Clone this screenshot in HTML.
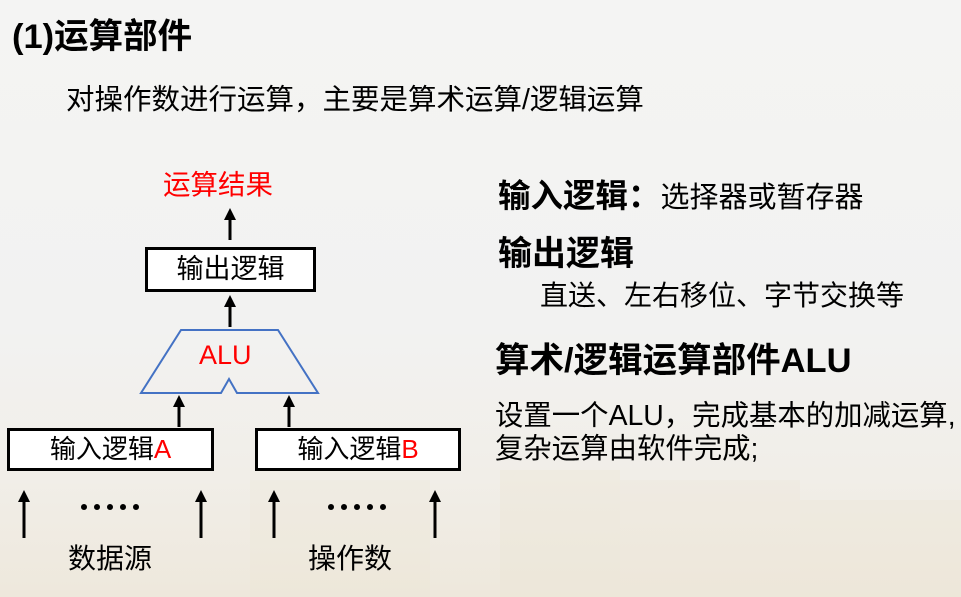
<!DOCTYPE html>
<html><head><meta charset="utf-8"><style>
body{margin:0;width:961px;height:597px;overflow:hidden;position:relative;
background:linear-gradient(180deg,#f4f4f3 0%,#f2f2f1 55%,#f1eee8 80%,#eee8dc 100%);
font-family:"Liberation Sans","Noto Sans CJK SC",sans-serif;color:#000}
.t{position:absolute;white-space:nowrap;line-height:1}
.b{font-weight:bold}
.box{position:absolute;border:3px solid #000;background:#fff;box-sizing:border-box;text-align:center;font-size:26px}
.red{color:#f00}
.bg{position:absolute;background:#ece5d4;opacity:.35}
</style></head><body>
<div class="bg" style="left:500px;top:470px;width:120px;height:127px"></div>
<div class="bg" style="left:620px;top:480px;width:180px;height:117px;opacity:.25"></div>
<div class="bg" style="left:800px;top:500px;width:161px;height:97px;opacity:.3"></div>
<div class="bg" style="left:250px;top:480px;width:180px;height:117px;opacity:.2"></div>

<div class="t b" style="left:12px;top:20px;font-size:34.5px">(1)运算部件</div>
<div class="t" style="left:66px;top:86px;font-size:28.5px">对操作数进行运算，主要是算术运算/逻辑运算</div>

<div class="t red" style="left:163px;top:171px;font-size:27.5px">运算结果</div>

<svg style="position:absolute;left:0;top:0" width="480" height="597">
<defs><marker id="a" markerWidth="4" markerHeight="4" refX="2" refY="2" orient="auto"><path d="M0,0L4,2L0,4z" fill="#000"/></marker></defs>
<g stroke="#000" stroke-width="3" marker-end="url(#a)">
<line x1="230" y1="240" x2="230" y2="214"/>
<line x1="230" y1="327" x2="230" y2="301"/>
<line x1="179" y1="427" x2="179" y2="401"/>
<line x1="289" y1="427" x2="289" y2="401"/>
<line x1="24" y1="538" x2="24" y2="496"/>
<line x1="201" y1="538" x2="201" y2="496"/>
<line x1="274" y1="538" x2="274" y2="496"/>
<line x1="435" y1="538" x2="435" y2="496"/>
</g>
<path d="M181,330L278,330L318,393L237,393L229,379L221,393L141,393Z" fill="none" stroke="#4472c4" stroke-width="2"/>
<g fill="#000">
<circle cx="84" cy="507" r="3"/><circle cx="97" cy="507" r="3"/><circle cx="110" cy="507" r="3"/><circle cx="123" cy="507" r="3"/><circle cx="136" cy="507" r="3"/>
<circle cx="331" cy="507" r="3"/><circle cx="344" cy="507" r="3"/><circle cx="357" cy="507" r="3"/><circle cx="370" cy="507" r="3"/><circle cx="383" cy="507" r="3"/>
</g>
</svg>

<div class="box" style="left:145px;top:247px;width:171px;height:45px;line-height:39px;font-size:27px">输出逻辑</div>
<div class="t red" style="left:199px;top:342px;font-size:27px">ALU</div>
<div class="box" style="left:7px;top:428px;width:207px;height:43px;line-height:37px">输入逻辑<span class="red">A</span></div>
<div class="box" style="left:255px;top:428px;width:206px;height:43px;line-height:37px">输入逻辑<span class="red">B</span></div>

<div class="t" style="left:68px;top:545px;font-size:28px">数据源</div>
<div class="t" style="left:308px;top:545px;font-size:28px">操作数</div>

<div class="t" style="left:498px;top:180px;font-size:29px"><span class="b" style="font-size:32.5px">输入逻辑：</span>选择器或暂存器</div>
<div class="t b" style="left:498px;top:237px;font-size:34px">输出逻辑</div>
<div class="t" style="left:540px;top:282px;font-size:28px">直送、左右移位、字节交换等</div>
<div class="t b" style="left:495px;top:344px;font-size:34.5px">算术/逻辑运算部件ALU</div>
<div class="t" style="left:495px;top:402px;font-size:28.4px">设置一个ALU，完成基本的加减运算,</div>
<div class="t" style="left:495px;top:435px;font-size:28.4px">复杂运算由软件完成;</div>
</body></html>
